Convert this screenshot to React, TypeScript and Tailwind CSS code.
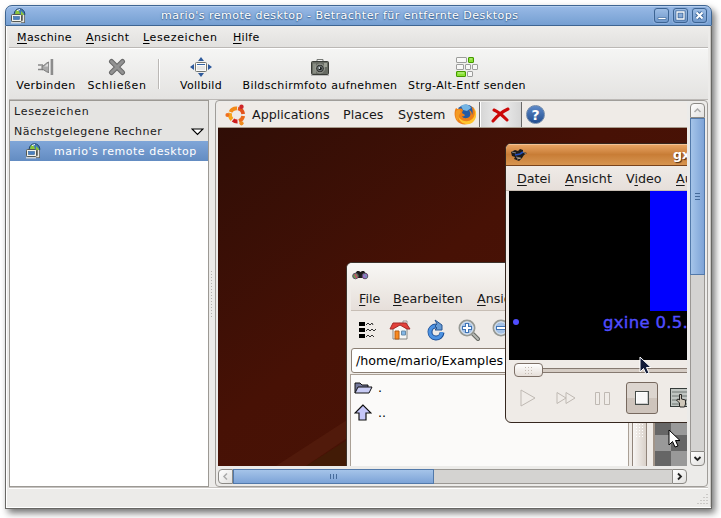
import React from "react";

type IconProps = { w: number; h: number; className?: string; children: React.ReactNode };
const Icon = ({ w, h, className = "", children }: IconProps) => (
  <svg width={w} height={h} viewBox={`0 0 ${w} ${h}`} className={`block shrink-0 ${className}`} fill="none">
    {children}
  </svg>
);

const RemoteIcon = () => (
  <Icon w={17} h={16}>
    <circle cx="9.5" cy="6" r="5.3" fill="#3f78b5" stroke="#24486e" />
    <path d="M6 2l3 1 1 3-2 2-3-2zM11 3l3 3-1 4-2-2z" fill="#8cc63b" />
    <path d="M7 2.5l3-1" stroke="#fff" />
    <path d="M13.500 7v6.500h-3" stroke="#5d605c" strokeWidth="3" />
    <path d="M13.500 7v6.500h-3" stroke="#e6e6e2" strokeWidth="1.400" />
    <rect x="1.500" y="6.500" width="10" height="7" rx="1" fill="#f4f4ee" stroke="#555850" />
    <rect x="3.500" y="8.500" width="6" height="3" fill="#4a80bf" stroke="#34659b" strokeWidth=".6" />
    <path d="M1 14.800h10" stroke="#e4e4e0" strokeWidth="1.200" />
  </Icon>
);

const PlugIcon = () => (
  <Icon w={18} h={18}>
    <path d="M1 7h5M1 11.500h5" stroke="#898989" strokeWidth="1.4" />
    <path d="M5 8c3 0 3-3 7-4v10.500c-4-.5-4-3-7-3z" fill="#a9a9a9" stroke="#777" />
    <path d="M7 8.500c2-1 2-2 4-3v3z" fill="#ddd" />
    <rect x="12" y="1.5" width="1.6" height="15" fill="#eee" />
    <rect x="13.6" y="1" width="2.6" height="16" fill="#8c8c8c" />
  </Icon>
);
const CloseIcon = () => (
  <Icon w={18} h={18}>
    <path d="M3.5 3.5l11 11M14.5 3.5l-11 11" stroke="#686868" strokeWidth="5" strokeLinecap="round" />
    <path d="M3.5 3.5l11 11M14.5 3.5l-11 11" stroke="#929292" strokeWidth="3" strokeLinecap="round" />
  </Icon>
);
const FullscreenIcon = () => (
  <Icon w={22} h={20}>
    <path d="M11 0l3 4H8zM11 20l3-4H8zM0 10l4-3v6zM22 10l-4-3v6z" fill="#2e5a9c" />
    <rect x="5.5" y="5.500" width="11" height="9" rx="1" fill="#fafafa" stroke="#71746f" />
    <rect x="7" y="7" width="8" height="1" fill="#3465a4" />
    <rect x="7" y="9" width="8" height="4" fill="#e7e7e5" />
  </Icon>
);
const CameraIcon = () => (
  <Icon w={20} h={19}>
    <path d="M7 4V1.5h6V4" fill="#eee" stroke="#777a76" />
    <rect x="1.500" y="3.500" width="17" height="13" rx="1" fill="#676b63" stroke="#393c37" />
    <path d="M3 5.500h3v10H3z" fill="#888d83" />
    <path d="M14 5h3v4h-3z" fill="#9ca095" />
    <circle cx="10" cy="10.500" r="4.400" fill="#343732" stroke="#a5a8a1" />
    <circle cx="10" cy="10.500" r="2.300" fill="#171917" stroke="#8b9499" strokeWidth=".8" />
    <circle cx="9.3" cy="10" r=".9" fill="#d8e2e4" />
    <path d="M1 17.500h18" stroke="#bbb" />
  </Icon>
);
const KeysIcon = () => (
  <Icon w={24} h={22}>
    <g fill="#f7f7f6" stroke="#9c9d9b">
      <rect x="1.5" y="1.5" width="10" height="5" rx=".5" />
      <rect x="1.5" y="8.5" width="7" height="5" rx=".5" />
      <rect x="10.5" y="8.5" width="5" height="5" rx=".5" />
      <rect x="17.5" y="8.5" width="5" height="5" rx=".5" />
      <rect x="12.5" y="15.5" width="5" height="5" rx=".5" />
    </g>
    <g fill="#8ae234" stroke="#459800">
      <rect x="13.5" y="1.5" width="5" height="5" rx=".5" />
      <rect x="1.5" y="15.5" width="9" height="5" rx=".5" />
    </g>
    <path d="M3 3h6M15 3h2M3 17h6" stroke="#fff" opacity=".5" />
  </Icon>
);

const UbuntuIcon = () => (
  <Icon w={22} h={22}>
    <g strokeWidth="3.8">
      <path d="M5.500 8A6.500 6.500 0 0 1 12 4.500" stroke="#f38a17" />
      <path d="M13 4.500A6.500 6.500 0 0 1 18.200 10" stroke="#e3521b" />
      <path d="M18.200 12A6.500 6.500 0 0 1 14 17" stroke="#ea691b" />
      <path d="M12.500 17.500A6.500 6.500 0 0 1 8 16" stroke="#ce1d1d" />
      <path d="M7 15.500A6.500 6.500 0 0 1 5.200 9" stroke="#f6a31b" />
    </g>
    <circle cx="2.400" cy="11" r="2" fill="#ef6f20" />
    <circle cx="16.500" cy="2.800" r="2.200" fill="#cf2528" />
    <circle cx="16.500" cy="19.300" r="2.100" fill="#f08b1d" />
  </Icon>
);
const FirefoxIcon = () => (
  <Icon w={23} h={23}>
    <circle cx="12" cy="11" r="9.500" fill="#245ba6" />
    <path d="M7 3c4-3 9-1 10 2l-4 3-4-1z" fill="#74b5e4" />
    <path d="M2 5c1 1 2 1 3 1 2-1 3 0 4 1L8 10l3 2c-1 2-2 1-3 1 1 3 6 3 8 0 1-2 0-4-1-6 3 1 3 4 3 5 1-2 1-6-1-9 4 2 6 8 4 12-4 8-14 8-18 3C0 14 0 8 2 5z" fill="#ed7f18" />
    <path d="M19 4c4 6 1 13-5 14-5 1-8-2-10-5 1 8 11 11 16 5 3-4 3-11-1-14z" fill="#ffc52e" />
    <path d="M2 8c-1 5 0 8 2 10l1-6 2-3-2-3z" fill="#f39b24" />
  </Icon>
);
const HelpIcon = () => (
  <div className="flex h-[19px] w-[19px] items-center justify-center rounded-full border border-[#6e87a8] bg-linear-to-b from-[#5d89c8] to-[#234e90] pt-px text-[14px] leading-none font-bold text-white">
    ?
  </div>
);

const Tool = ({ label, className, children }: { label: string; className: string; children: React.ReactNode }) => (
  <div className={`flex shrink-0 flex-col items-center whitespace-nowrap ${className}`}>
    <div className="flex h-[24px] items-center justify-center">{children}</div>
    <span className="leading-[13px]">{label}</span>
  </div>
);

const Mnemonic = ({ text, at = 0, className = "" }: { text: string; at?: number; className?: string }) => (
  <span className={`shrink-0 whitespace-nowrap ${className}`}>
    {text.slice(0, at)}
    <span className="underline decoration-1 underline-offset-2">{text[at]}</span>
    {text.slice(at + 1)}
  </span>
);

const TitleButton = ({ children }: { children: React.ReactNode }) => (
  <div className="h-[15px] w-[15px] rounded-[3px] border border-[#3c6493] bg-linear-to-b from-[#9dbde5] to-[#6f98cb] shadow-[0_0_0_1px_#8dafdc]">
    <Icon w={13} h={13}>{children}</Icon>
  </div>
);

const GxineWindow = () => (
  <div className="absolute top-[41px] left-[287px] flex h-[280px] w-[240px] flex-col overflow-hidden rounded-[6px] border border-[#35271f] bg-[#efebe7]">
    <div className="flex h-[22px] shrink-0 items-center border-b border-[#79431c] bg-linear-to-b from-[#eba766] via-[#c87d36] to-[#d79550] pl-[5px] shadow-[inset_0_1px_0_#f3c397]">
      <Icon w={16} h={12}>
        <path d="M0 3l4-2 3 1 2-2 3 1v2l4 1-3 2-2 3-3 3-5-2 1-2-3-1z" fill="#1c1b1b" />
        <path d="M1 3l4 1M12 3l3 2M5 8l4 1" stroke="#858585" />
        <path d="M4 6l5-1 3-2" stroke="#2250c0" strokeWidth="1.6" />
        <path d="M6 10l4-1" stroke="#b9a183" />
      </Icon>
      <span className="ml-[146px] shrink-0 text-[12.7px] font-bold whitespace-nowrap text-white [text-shadow:1px_1px_1px_#4c2a12]">gxine</span>
    </div>
    <div className="flex h-[25px] shrink-0 items-center border-b border-[#c8beb4] bg-linear-to-b from-[#efebe7] to-[#e6dfda] pt-[2px] pl-[11px]">
      <Mnemonic text="Datei" className="w-[48px]" />
      <Mnemonic text="Ansicht" className="w-[61px]" />
      <Mnemonic text="Video" at={1} className="w-[50px]" />
      <Mnemonic text="Audio" />
    </div>
    <div className="ml-[3px] flex h-[169px] shrink-0 flex-col bg-black">
      <div className="ml-[141px] h-[120px] shrink-0 bg-[#0000ff]" />
      <div className="flex h-[22px] items-center">
        <span className="ml-[4px] h-[6px] w-[6px] shrink-0 rounded-full bg-[#504dff]" />
        <span className="ml-[84px] pt-[2px] text-[16.5px] tracking-[.3px] whitespace-nowrap text-[#504dff] [-webkit-text-stroke:.4px_#504dff]">gxine 0.5.11</span>
      </div>
    </div>
    <div className="flex h-[20px] shrink-0 items-center pl-[8px]">
      <div className="grid h-[14px] w-[29px] shrink-0 place-items-center rounded-[4px] border border-[#7d7067] bg-linear-to-b from-white to-[#e6dfd9]">
        <div className="h-[9px] w-[9px] bg-[radial-gradient(#c4bab1_.7px,transparent_1px)] bg-[size:3px_3px]" />
      </div>
      <div className="h-[5px] flex-1 border-y border-[#857970] bg-[#d5ccc4]" />
    </div>
    <div className="flex h-[36px] items-center">
      <Icon w={18} h={20} className="ml-[13px]">
        <path d="M2 2l14 8-14 8z" fill="#f0ece8" stroke="#bfb9b3" />
      </Icon>
      <Icon w={22} h={16} className="ml-[18px]">
        <path d="M2 2.5l9 5.5-9 5.5zM11 2.5l9 5.5-9 5.5z" fill="#f0ece8" stroke="#bfb9b3" />
      </Icon>
      <Icon w={17} h={16} className="ml-[17px]">
        <path d="M1.500 2.500h4v12h-4zM10.500 2.500h5v12h-5z" fill="#f0ece8" stroke="#bfb9b3" />
      </Icon>
      <div className="ml-[15px] grid h-[32px] w-[32px] shrink-0 place-items-center rounded-[3px] border border-[#77695f] bg-[linear-gradient(#dcd5cf_50%,#cec4bc_50%)]">
        <div className="h-[14px] w-[14px] border border-[#464c49] bg-[#f8f8f8] shadow-[inset_-1px_-1px_0_#ccc,inset_1px_1px_0_#fff]" />
      </div>
      <Icon w={22} h={20} className="ml-[12px]">
        <rect x=".5" y=".500" width="20" height="18" fill="#bfc5c1" stroke="#353b39" />
        <path d="M2 4h17M2 8h17M2 12h17M2 16h17" stroke="#6f7673" />
        <path d="M9.500 18v-3l-3-3 1.500-1 1.500 1V6.500h2V11l4 1v4l-1 3H10z" fill="#cfc7b9" stroke="#292927" />
      </Icon>
    </div>
  </div>
);

const MagnifierIcon = ({ plus = false }: { plus?: boolean }) => (
  <Icon w={22} h={22} className={plus ? "ml-[12px]" : "ml-[12px]"}>
    <path d="M15 15l5 5" stroke="#666963" strokeWidth="4" strokeLinecap="round" />
    <path d="M15 15l5 5" stroke="#b8bab5" strokeWidth="2" strokeLinecap="round" />
    <circle cx="9" cy="9" r="7.500" fill="#a4c1e5" stroke="#969994" strokeWidth="2" />
    <circle cx="9" cy="9" r="6.200" stroke="#e6edf4" />
    <path d="M4 9h10" stroke="#3f74b5" strokeWidth="4" />
    {plus && <path d="M9 4v10" stroke="#3f74b5" strokeWidth="4" />}
    <path d="M5 9h8" stroke="#fff" strokeWidth="2" />
    {plus && <path d="M9 5v8" stroke="#fff" strokeWidth="2" />}
  </Icon>
);

const FileWindow = () => (
  <div className="absolute top-[160px] left-[128px] flex h-[240px] w-[420px] flex-col overflow-hidden rounded-t-[6px] border border-[#3d322b] bg-[#efebe7]">
    <div className="flex h-[24px] shrink-0 items-center bg-linear-to-b from-[#f8f7f5] to-[#efebe7] pl-[5px]">
      <Icon w={17} h={10}>
        <path d="M3 4l2-3h2l1.500 1L10 1h2l3 4-3 3H4z" fill="#1d1b1c" />
        <circle cx="3.500" cy="6" r="2.800" fill="#6d9e55" stroke="#594c64" />
        <circle cx="13" cy="6" r="2.800" fill="#9b70c8" stroke="#594c64" />
        <path d="M3 4l2 4" stroke="#cf496d" strokeWidth="1.500" />
        <path d="M12 4l3 4" stroke="#57a4a2" />
      </Icon>
    </div>
    <div className="ml-[4px] flex h-[24px] shrink-0 items-center border-b border-[#c7beb5] bg-linear-to-b from-[#efebe7] to-[#e6dfda] pl-[8px]">
      <Mnemonic text="File" className="w-[34px]" />
      <Mnemonic text="Bearbeiten" className="w-[84px]" />
      <Mnemonic text="Ansicht" />
    </div>
    <div className="flex h-[37px] shrink-0 items-center pl-[11px]">
      <Icon w={18} h={18}>
        <path d="M1 1h6v4H1zM1 7h6v4H1zM1 13h6v4H1z" fill="#000" />
        <path d="M8 4l2-2 2 2 2-2 1 2M8 10l2-2 2 2 2-2 2 2 2-2M8 16l2-2 2 2 2-2 2 2" stroke="#333" />
      </Icon>
      <Icon w={22} h={22} className="ml-[13px]">
        <path d="M14 2h4v6h-4z" fill="#eee" stroke="#999" />
        <path d="M4 9l7-5 7 6v10H4z" fill="#f7f7f5" stroke="#858783" />
        <path d="M1 10l3-6h13l4 6h-3l-7-4-7 4z" fill="#e3413a" stroke="#a32b28" />
        <path d="M6 12h4v8H6z" fill="#f88a20" stroke="#b75d13" />
        <path d="M12.500 12h4v4h-4z" fill="#83b7e7" stroke="#668caa" />
      </Icon>
      <Icon w={22} h={24} className="ml-[13px]">
        <path d="M12 8a6 6 0 1 0 6 6.500" stroke="#1e4f95" strokeWidth="5" />
        <path d="M12 8a6 6 0 1 0 5.800 6" stroke="#4d92e1" strokeWidth="3.200" />
        <path d="M11 2l7 5v5h-7l2-2-2-2 2-2z" fill="#659ad4" stroke="#28558f" />
      </Icon>
      <MagnifierIcon plus />
      <MagnifierIcon />
    </div>
    <div className="ml-[4px] flex h-[25px] shrink-0 items-center rounded-[3px] border border-[#8b7f74] bg-white pl-[4px] whitespace-nowrap text-black">/home/mario/Examples</div>
    <div className="mt-[1px] flex min-h-0 flex-1 pl-[3px]">
      <div className="w-[279px] shrink-0 border border-[#aaa096] bg-[#fbfaf9] text-black">
        <div className="flex h-[25px] items-center pl-[3px]">
          <Icon w={19} h={14}>
            <path d="M1 12V2h5l2 2h6v3" fill="#74789b" stroke="#111" />
            <path d="M1 12l3-6h14l-3 6z" fill="#c8cbf4" stroke="#111" />
          </Icon>
          <span className="ml-[5px]">.</span>
        </div>
        <div className="flex h-[25px] items-center pl-[3px]">
          <Icon w={18} h={18}>
            <path d="M9 1L1 9h4v7h7V9h5z" fill="#c5c6f9" stroke="#111" strokeWidth="1.200" />
          </Icon>
          <span className="ml-[6px]">..</span>
        </div>
      </div>
      <div className="ml-[3px] w-[15px] border-x border-[#91857b] bg-linear-to-r from-[#f8f6f4] to-[#d9d1c9] pt-[49px]">
        <div className="mx-auto h-[15px] w-[9px] bg-[radial-gradient(#fff_.8px,transparent_1px)] bg-[size:3px_3px]" />
      </div>
      <div className="ml-[6px] flex-1 border-l-2 border-[#a29589] bg-[conic-gradient(#666_25%,#999_0_50%,#666_0_75%,#999_0)] bg-[size:32px_32px] bg-[position:0_-3px]" />
    </div>
  </div>
);

const Pointer = ({ dark = false }: { dark?: boolean }) => (
  <Icon w={13} h={20}>
    <path d="M1 1v15l3.500-3.500L7 18l3-1-2.500-5.500H12z" fill={dark ? "#101a38" : "#fff"} stroke={dark ? "#fff" : "#000"} />
  </Icon>
);

const RemoteScreen = () => (
  <div className="relative h-[364px] w-[469px] shrink-0 overflow-hidden bg-linear-to-br from-[#2e0d06] via-[#471105] via-45% to-[#4a1507] text-[12.7px] tracking-normal text-[#181818]">
    <svg width="129" height="100" viewBox="0 0 129 100" className="absolute top-[264px] left-0">
      <path d="M58 100L129 54v18L88 100z" fill="#59200f" opacity=".6" />
      <path d="M88 100l41-26v26z" fill="#421b06" />
    </svg>
    <div className="flex h-[26px] items-center border-b border-[#a79b8c] bg-[#efebe7]">
      <div className="ml-[7px] w-[27px]"><UbuntuIcon /></div>
      <span className="w-[91px]">Applications</span>
      <span className="w-[55px]">Places</span>
      <span className="w-[56px]">System</span>
      <FirefoxIcon />
      <div className="ml-[2px] flex h-[25px] w-[43px] items-center justify-center border-x border-[#686868] bg-linear-to-r from-[#d5d5d5] via-[#eee] to-[#d5d5d5] shadow-[inset_1px_0_0_#fff]">
        <Icon w={20} h={18}>
          <path d="M3 4c5 2 9 6 13 10M17 3C10 6 7 9 2 15" stroke="#cc0808" strokeWidth="3" strokeLinecap="round" />
        </Icon>
      </div>
      <div className="ml-[4px]"><HelpIcon /></div>
    </div>
    <FileWindow />
    <GxineWindow />
    <div className="absolute top-[254px] left-[421px]"><Pointer dark /></div>
    <div className="absolute top-[327px] left-[450px]"><Pointer /></div>
  </div>
);

const scrollButton = "grid h-[15px] w-[15px] shrink-0 place-items-center border border-[#8b8985] bg-linear-to-br from-white to-[#e1e0de]";

export default function App() {
  return (
    <div className="h-[518px] w-[721px] overflow-hidden bg-white pt-[5px] pl-[5px] font-['DejaVu_Sans',sans-serif] text-[11px] tracking-[.3px] text-black">
      <div className="flex h-[504px] w-[707px] flex-col rounded-t-[7px] bg-[#ecebe9] shadow-[3px_4px_7px_rgba(0,0,0,.55)]">
        <header className="flex h-[21px] shrink-0 items-center rounded-t-[7px] border border-[#3e6592] bg-linear-to-b from-[#99bae6] to-[#759fd2] shadow-[inset_0_1px_0_#b3cdee]">
          <div className="ml-[4px] w-[151px]"><RemoteIcon /></div>
          <span className="w-[493px] pt-[2px] tracking-[.5px] whitespace-nowrap text-white [text-shadow:0_0_2px_#34577f,0_1px_1px_#4670a3]">
            mario's remote desktop - Betrachter für entfernte Desktops
          </span>
          <div className="flex gap-[4px]">
            <TitleButton><path d="M3 8.500h8v2H3z" fill="#fff" stroke="#416b9e" strokeWidth=".7" /></TitleButton>
            <TitleButton><path d="M3 3h7v7H3z" stroke="#3e6797" strokeWidth="3" /><path d="M3 3h7v7H3z" stroke="#fff" strokeWidth="1.300" /></TitleButton>
            <TitleButton><path d="M3.500 3.500l6 6M9.500 3.500l-6 6" stroke="#416b9e" strokeWidth="4" /><path d="M3.500 3.500l6 6M9.500 3.500l-6 6" stroke="#fff" strokeWidth="2" /></TitleButton>
          </div>
        </header>

        <div className="flex min-h-0 flex-1 flex-col border border-t-0 border-[#686764] px-[3px] shadow-[inset_1px_-1px_0_#fff,inset_-1px_0_0_#c9c7c4]">
          <nav className="flex h-[22px] shrink-0 items-center border-b border-[#bbb8b5] bg-linear-to-b from-[#eeedeb] to-[#e2e1df] pt-[3px] pl-[8px]">
            <Mnemonic text="Maschine" className="w-[69px] tracking-[.4px]" />
            <Mnemonic text="Ansicht" className="w-[57px] tracking-[.4px]" />
            <Mnemonic text="Lesezeichen" className="w-[90px] tracking-[.64px]" />
            <Mnemonic text="Hilfe" />
          </nav>
          <div className="flex h-[52px] shrink-0 border-t border-b border-t-white border-b-[#bcb9b6] bg-linear-to-b from-[#f5f5f4] to-[#e4e3e1] pt-[6px] pl-[7px]">
            <Tool label="Verbinden" className="w-[60px] tracking-[.4px]"><PlugIcon /></Tool>
            <Tool label="Schließen" className="ml-[11px] w-[60px] tracking-[.6px]"><CloseIcon /></Tool>
            <div className="mt-[4px] ml-[11px] h-[30px] w-[2px] border-r border-l border-r-white border-l-[#bbb8b5]" />
            <Tool label="Vollbild" className="ml-[20px] w-[42px]"><FullscreenIcon /></Tool>
            <Tool label="Bildschirmfoto aufnehmen" className="ml-[19px] w-[158px] tracking-[.4px]"><CameraIcon /></Tool>
            <Tool label="Strg-Alt-Entf senden" className="ml-[9px] w-[118px] tracking-[.34px]"><KeysIcon /></Tool>
          </div>

          <main className="flex h-[387px] shrink-0">
            <aside className="w-[200px] shrink-0 border border-[#9c9994] bg-white whitespace-nowrap">
              <div className="h-[40px] bg-[#e5e4e2] pl-[4px] text-[#202020]">
                <div className="flex h-[20px] items-center pt-[2px] tracking-[.72px]">Lesezeichen</div>
                <div className="flex h-[20px] items-center justify-between pt-[2px] pr-[4px] tracking-[.47px]">
                  Nächstgelegene Rechner
                  <Icon w={13} h={8}><path d="M1 1h11L6.500 6.500z" fill="#fff" stroke="#000" strokeWidth="1.200" /></Icon>
                </div>
              </div>
              <div className="flex h-[20px] items-center bg-linear-to-b from-[#80a6d8] to-[#638cc2] pl-[15px] tracking-[.54px] text-white">
                <div className="w-[29px]"><RemoteIcon /></div><span className="pt-[2px]">mario's remote desktop</span>
              </div>
            </aside>
            <div className="flex w-[6px] shrink-0 items-center justify-center">
              <div className="h-[48px] w-[4px] bg-[radial-gradient(#b4b2b0_.6px,transparent_1px)] bg-[size:3px_3px]" />
            </div>
            <section className="flex h-[387px] w-[493px] shrink-0 flex-col rounded-[4px] border border-[#a09d99] bg-[#ecebe9] pt-px pl-[2px]">
              <div className="flex gap-[3px]">
                <RemoteScreen />
                <div className="mt-px flex w-[15px] flex-col">
                  <div className={`${scrollButton} rounded-t-[4px]`}><Icon w={9} h={9}><path d="M1.500 6l3-3 3 3" stroke="#aaa" strokeWidth="1.500" /></Icon></div>
                  <div className="grid h-[157px] place-items-center border border-[#5279aa] bg-linear-to-r from-[#a5c4e9] to-[#7da3d7]">
                    <div className="flex flex-col gap-[2px]"><i className="h-px w-[5px] bg-[#456b9b]" /><i className="h-px w-[5px] bg-[#456b9b]" /><i className="h-px w-[5px] bg-[#456b9b]" /></div>
                  </div>
                  <div className="flex-1 border-x border-[#9a9793] bg-[#d4d3d1]" />
                  <div className={`${scrollButton} rounded-b-[4px]`}><Icon w={9} h={9}><path d="M1.500 3l3 3 3-3" stroke="#222" strokeWidth="1.800" /></Icon></div>
                </div>
              </div>
              <div className="mt-[3px] flex w-[469px]">
                <div className={`${scrollButton} rounded-l-[4px]`}><Icon w={9} h={9}><path d="M6 1.500l-3 3 3 3" stroke="#aaa" strokeWidth="1.500" /></Icon></div>
                <div className="grid h-[15px] w-[201px] place-items-center border border-[#5279aa] bg-linear-to-b from-[#a5c4e9] to-[#7da3d7]">
                  <div className="flex gap-[2px]"><i className="h-[5px] w-px bg-[#456b9b]" /><i className="h-[5px] w-px bg-[#456b9b]" /><i className="h-[5px] w-px bg-[#456b9b]" /></div>
                </div>
                <div className="flex-1 border-y border-[#9a9793] bg-[#d4d3d1]" />
                <div className={`${scrollButton} rounded-r-[4px]`}><Icon w={9} h={9}><path d="M3 1.500l3 3-3 3" stroke="#222" strokeWidth="1.800" /></Icon></div>
              </div>
            </section>
          </main>
          <footer className="flex flex-1 items-end justify-end border-t border-[#c6c3c0] pb-[3px] shadow-[inset_0_1px_0_#fff]">
            <Icon w={12} h={12}>
              <path d="M11 1v1M11 4v1M8 4v1M11 7v1M8 7v1M5 7v1M11 10v1M8 10v1M5 10v1M2 10v1" stroke="#aaa7a4" />
            </Icon>
          </footer>
        </div>
      </div>
    </div>
  );
}
